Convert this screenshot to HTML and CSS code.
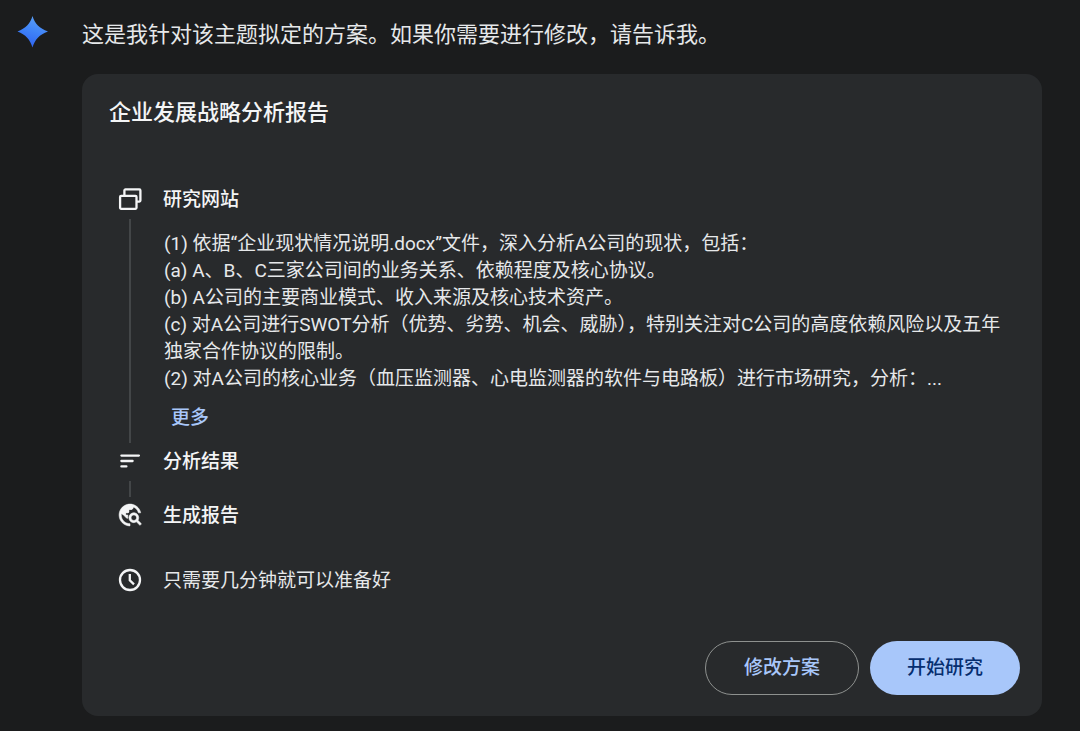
FILE: index.html
```html
<!DOCTYPE html>
<html lang="zh-CN">
<head>
<meta charset="utf-8">
<meta name="viewport" content="width=device-width, initial-scale=1">
<title>企业发展战略分析报告</title>
<link rel="stylesheet" href="styles.css">
</head>
<body>
<main class="message">
  <svg class="avatar" viewBox="0 0 32 32" aria-hidden="true">
    <defs>
      <linearGradient id="spark" x1="0.7" y1="0" x2="0.4" y2="1">
        <stop offset="0" stop-color="#5ba0f5"/>
        <stop offset="0.5" stop-color="#3f83f8"/>
        <stop offset="1" stop-color="#2f62f0"/>
      </linearGradient>
    </defs>
    <path fill="url(#spark)" d="M15.5 0C17.8 7.4 22.4 12.6 31 15.4C22.4 18.4 17.8 23.6 15.5 31.5C13.2 23.6 8.6 18.4 0.5 15.4C8.6 12.6 13.2 7.4 15.5 0Z"/>
  </svg>
  <div class="content">
    <p class="intro">这是我针对该主题拟定的方案。如果你需要进行修改，请告诉我。</p>
    <section class="card">
      <h1 class="card-title">企业发展战略分析报告</h1>
      <ol class="steps">
        <li class="step">
          <div class="marker">
            <svg class="icon" viewBox="0 0 24 24" aria-hidden="true"><g fill="none" stroke="currentColor" stroke-width="2.3"><path d="M6.4 9V3.4a1 1 0 0 1 1-1H21.4a1 1 0 0 1 1 1V13.6a1 1 0 0 1-1 1H18.6"/><rect x="2.1" y="8.9" width="16.4" height="12.9" rx="1"/></g></svg>
            <span class="rail"></span>
          </div>
          <div class="step-main">
            <h2 class="step-title">研究网站</h2>
            <p class="detail">(1) 依据“企业现状情况说明.docx”文件，深入分析A公司的现状，包括：<br>(a) A、B、C三家公司间的业务关系、依赖程度及核心协议。<br>(b) A公司的主要商业模式、收入来源及核心技术资产。<br>(c) 对A公司进行SWOT分析（优势、劣势、机会、威胁），特别关注对C公司的高度依赖风险以及五年独家合作协议的限制。<br>(2) 对A公司的核心业务（血压监测器、心电监测器的软件与电路板）进行市场研究，分析：...</p>
            <button class="more" type="button">更多</button>
          </div>
        </li>
        <li class="step">
          <div class="marker">
            <svg class="icon" viewBox="0 0 24 24" aria-hidden="true"><path fill="none" stroke="currentColor" stroke-width="2.3" stroke-linecap="round" d="M3.4 6.6H20.9M3.4 12H14.6M3.4 17.4H8.4"/></svg>
            <span class="rail"></span>
          </div>
          <h2 class="step-title">分析结果</h2>
        </li>
        <li class="step">
          <div class="marker">
            <svg class="icon" viewBox="1 1 22 22" aria-hidden="true"><path fill="currentColor" stroke="currentColor" stroke-width="0.5" d="M19.3,16.9c0.4-0.7,0.7-1.5,0.7-2.4c0-2.5-2-4.5-4.5-4.5S11,12,11,14.5s2,4.5,4.5,4.5c0.9,0,1.7-0.3,2.4-0.7l3.2,3.2l1.4-1.4L19.3,16.9z M15.5,17c-1.4,0-2.5-1.1-2.5-2.5s1.1-2.5,2.5-2.5s2.5,1.1,2.5,2.5S16.9,17,15.5,17z M12,20v2C6.48,22,2,17.52,2,12C2,6.48,6.48,2,12,2c4.84,0,8.87,3.44,9.8,8h-2.07c-0.64-2.46-2.4-4.47-4.73-5.41V5c0,1.1-0.9,2-2,2h-2v2c0,0.55-0.45,1-1,1H8v2h2v3H9l-4.79-4.79C4.08,10.79,4,11.38,4,12C4,16.41,7.59,20,12,20z"/><path fill="currentColor" d="M3.2 10.2C3.8 5.8 7.6 3 12 3L15 4.4V5C15 6.1 14.1 7 13 7H11V9C11 9.6 10.6 10 10 10H8V12H6Z"/></svg>
          </div>
          <h2 class="step-title">生成报告</h2>
        </li>
      </ol>
      <div class="step estimate">
        <div class="marker">
          <svg class="icon" viewBox="0 0 24 24" aria-hidden="true"><g fill="none" stroke="currentColor" stroke-width="2.3"><circle cx="12" cy="12" r="10"/><path d="M11.8 6V12.3L16 16.4"/></g></svg>
        </div>
        <p class="estimate-text">只需要几分钟就可以准备好</p>
      </div>
      <div class="actions">
        <button class="btn btn-outline" type="button">修改方案</button>
        <button class="btn btn-primary" type="button">开始研究</button>
      </div>
    </section>
  </div>
</main>
</body>
</html>
```
FILE: styles.css
```css
* {
  box-sizing: border-box;
}

body {
  margin: 0;
  background: #1b1c1d;
  color: #e6e8ea;
  font-family: Roboto, "Noto Sans CJK SC", sans-serif;
  font-size: 19px;
  line-height: 28px;
}

h1, h2, p, ol {
  margin: 0;
  padding: 0;
}

button {
  font: inherit;
  cursor: pointer;
}

.message {
  display: flex;
  gap: 33px;
  padding: 16px 38px 15px 17px;
}

.avatar {
  flex: none;
  width: 32px;
  height: 32px;
}

.content {
  flex: 1;
  min-width: 0;
}

.intro {
  margin-bottom: 20px;
  font-size: 22px;
  line-height: 38px;
}

.card {
  padding: 23px 22px 21px 27px;
  border-radius: 16px;
  background: #282a2c;
}

.card-title {
  margin-bottom: 57px;
  color: #f4f5f6;
  font-size: 22px;
  font-weight: 500;
  line-height: 32px;
}

.steps {
  list-style: none;
}

.step {
  display: grid;
  grid-template-columns: 24px 1fr;
  column-gap: 21px;
  padding-left: 9px;
}

.step:not(:last-child) {
  min-height: 54px;
}

.marker {
  display: flex;
  flex-direction: column;
  align-items: center;
  color: #f4f5f6;
}

.icon {
  flex: none;
  width: 24px;
  height: 24px;
  margin: 1px 0 3px;
}

.rail {
  flex: 1;
  width: 2px;
  margin: 5px 0;
  background: #434648;
}

.step-title {
  color: #f4f5f6;
  font-size: 19px;
  font-weight: 500;
}

.detail {
  margin-top: 16px;
  padding: 0 16px 0 1px;
  line-height: 27px;
}

.more {
  display: block;
  margin: 12px 0 16px;
  padding: 0 8px;
  border: 0;
  background: none;
  color: #a8c7fa;
  font-weight: 500;
}

.step.estimate {
  min-height: 0;
  margin-top: 37px;
}

.actions {
  display: flex;
  justify-content: flex-end;
  gap: 11px;
  margin-top: 46px;
}

.btn {
  height: 54px;
  padding: 0 36px;
  border: 1px solid transparent;
  border-radius: 27px;
  font-weight: 500;
}

.btn-outline {
  padding: 0 38px;
  border-color: #8e918f;
  background: none;
  color: #a8c7fa;
}

.btn-primary {
  background: #a8c7fa;
  color: #062e6f;
}
```
